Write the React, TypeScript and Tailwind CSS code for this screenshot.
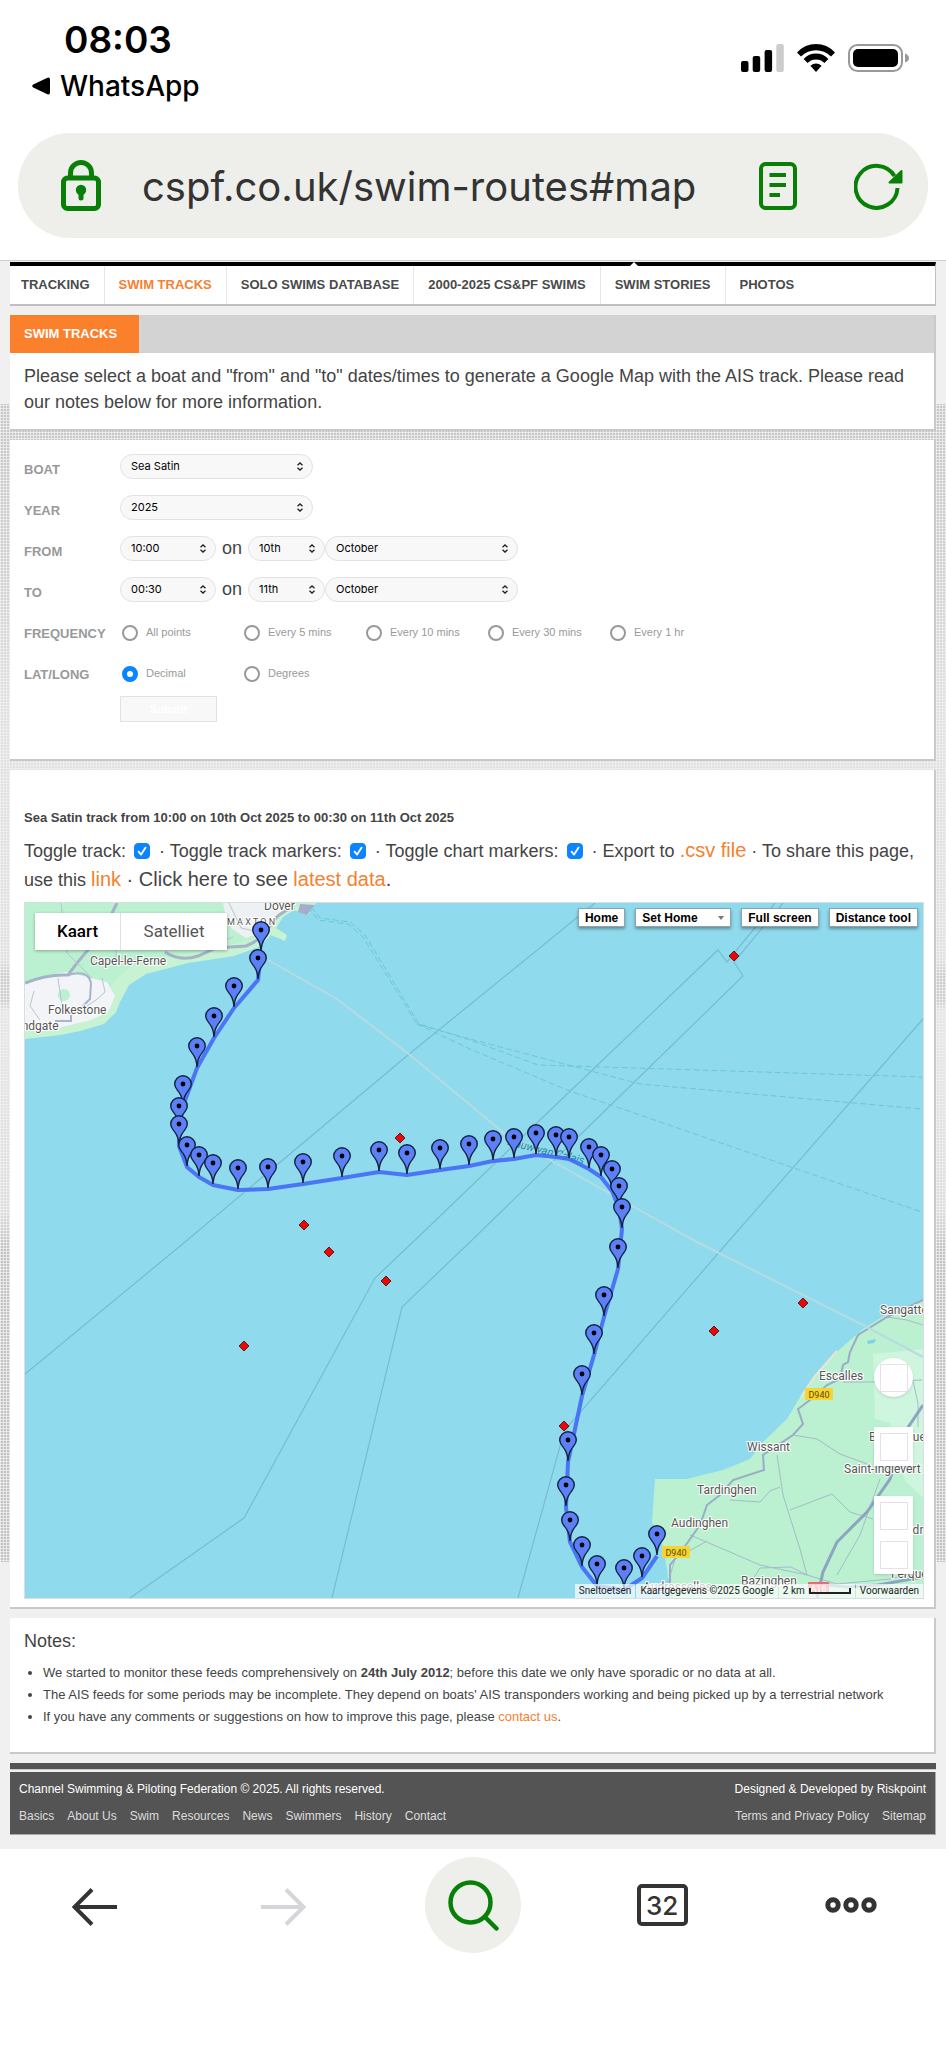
import React, { useState } from "react";

interface SelectProps {
  label: string;
  options: string[];
  width: string;
}

interface ToggleProps {
  label: string;
  checked: boolean;
  onChange: () => void;
}

interface RadioGroupProps {
  legend: string;
  name: string;
  options: string[];
  selected?: string;
}

const navItems = [
  "TRACKING",
  "SWIM TRACKS",
  "SOLO SWIMS DATABASE",
  "2000-2025 CS&PF SWIMS",
  "SWIM STORIES",
  "PHOTOS",
];

const footerLinks = [
  "Basics",
  "About Us",
  "Swim",
  "Resources",
  "News",
  "Swimmers",
  "History",
  "Contact",
];

// head of each pin, the tip is PIN_HEIGHT lower
const PIN_HEIGHT = 22;
const pins = [
  [236, 27], [233, 55], [209, 83], [189, 113], [172, 143], [158, 181],
  [154, 203], [154, 221], [162, 242], [174, 252], [188, 260], [213, 265],
  [243, 264], [278, 259], [317, 253], [354, 247], [382, 250], [415, 245],
  [444, 241], [468, 236], [489, 234], [511, 230], [531, 232], [544, 234],
  [564, 244], [576, 252], [587, 266], [594, 283], [597, 304], [593, 344],
  [579, 392], [569, 430], [557, 471], [543, 537], [541, 582], [545, 617],
  [557, 642], [572, 661], [599, 665], [617, 653], [632, 631],
];

const chartMarkers = [
  [375, 235], [279, 322], [304, 349], [361, 378], [219, 443],
  [709, 53], [689, 428], [778, 400], [539, 523],
];

const places = [
  { name: "Dover", x: 239, y: 7 },
  { name: "Capel-le-Ferne", x: 65, y: 62 },
  { name: "Folkestone", x: 23, y: 111 },
  { name: "Sandgate", x: -17, y: 127 },
  { name: "Sangatte", x: 855, y: 411 },
  { name: "Escalles", x: 794, y: 477 },
  { name: "Wissant", x: 722, y: 548 },
  { name: "Bonningues", x: 844, y: 538 },
  { name: "Saint-Inglevert", x: 819, y: 570 },
  { name: "Tardinghen", x: 672, y: 591 },
  { name: "Audinghen", x: 646, y: 624 },
  { name: "Landrethun", x: 868, y: 631 },
  { name: "Ferques", x: 866, y: 675 },
  { name: "Bazinghen", x: 716, y: 682 },
  { name: "Audresselles", x: 618, y: 688 },
];

const Select = ({ label, options, width }: SelectProps) => {
  return (
    <span className={`relative inline-flex ${width}`}>
      <select
        aria-label={label}
        className="h-[25px] w-full appearance-none rounded-full border border-[#e2e2e2] bg-[#f8f8f8] pl-[10px] pr-5 font-['Inter',sans-serif] text-[11px] text-black"
      >
        {options.map((option) => (
          <option key={option}>{option}</option>
        ))}
      </select>
      <svg
        className="pointer-events-none absolute right-[9px] top-2 h-[9px] w-2"
        viewBox="0 0 8 9"
        fill="none"
        stroke="#222"
        strokeWidth="1.3"
      >
        <path d="M1.5 3.2 4 .9l2.5 2.3M1.5 5.8 4 8.1l2.5-2.3" />
      </svg>
    </span>
  );
};

const Row = ({ name, children }: { name: string; children: React.ReactNode }) => {
  return (
    <div className="flex h-[41px] items-center">
      <span className="w-24 shrink-0 pt-[6px] text-[13px] font-bold text-[#999]">
        {name}
      </span>
      {children}
    </div>
  );
};

const RadioGroup = ({ legend, name, options, selected }: RadioGroupProps) => {
  return (
    <Row name={legend}>
      <div role="radiogroup" aria-label={legend} className="flex pt-1">
        {options.map((option) => (
          <label
            key={option}
            className="flex w-[122px] items-center gap-2 pl-[2px] text-[11px] text-[#999]"
          >
            <input
              type="radio"
              name={name}
              defaultChecked={option === selected}
              className="size-4 appearance-none rounded-full border-2 border-[#999] bg-white checked:border-[5px] checked:border-[#0a84ff]"
            />
            {option}
          </label>
        ))}
      </div>
    </Row>
  );
};

const Toggle = ({ label, checked, onChange }: ToggleProps) => {
  return (
    <label>
      {label}{" "}
      <span className="ml-[3px] mr-1 inline-grid size-4 align-[-2px]">
        <input
          type="checkbox"
          checked={checked}
          onChange={onChange}
          className="col-start-1 row-start-1 size-4 appearance-none rounded-[4px] border border-[#8d8d8d] checked:border-[#0a84ff] checked:bg-[#0a84ff]"
        />
        {checked && (
          <svg
            className="pointer-events-none col-start-1 row-start-1 size-4"
            viewBox="0 0 16 16"
            fill="none"
            stroke="white"
            strokeWidth="1.8"
            strokeLinecap="round"
            strokeLinejoin="round"
          >
            <path d="m4.6 8.6 2.5 3L11.6 4.6" />
          </svg>
        )}
      </span>
    </label>
  );
};

const StatusBar = () => {
  return (
    <div className="flex h-[133px] items-start justify-between pl-8 pr-9 pt-[17px] font-['Inter',sans-serif] text-black">
      <div>
        <p className="pl-8 text-[37px] font-semibold leading-[46px]">08:03</p>
        <a href="#back" className="mt-[5px] flex items-center gap-[10px] text-[28px] font-medium leading-9">
          <svg className="h-[18px] w-[18px]" viewBox="0 0 18 18">
            <path d="M1.2 7.6 15.4.7Q18 0 18 2.6v12.8q0 2.6-2.6 1.9L1.2 10.4q-2-1.4 0-2.8Z" />
          </svg>
          WhatsApp
        </a>
      </div>
      <div className="flex gap-[13px] pt-[27px]">
        <svg className="h-7 w-[43px]" viewBox="0 0 43 28">
          <rect x="0" y="17" width="7.5" height="11" rx="2" />
          <rect x="11.7" y="12" width="7.5" height="16" rx="2" />
          <rect x="23.6" y="6" width="7.5" height="22" rx="2" />
          <rect x="35.3" y="0" width="7.5" height="28" rx="2" fill="#ccc" />
        </svg>
        <svg className="h-7 w-[38px]" viewBox="0 0 38 28">
          <path d="M0 8.4Q8 0 19 0t19 8.4l-4 4Q27.500 6.200 19 6.200T4 12.400Z" />
          <path d="M6.600 15Q12 9.600 19 9.600T31.400 15l-4 4Q24 15.600 19 15.600T10.600 19Z" />
          <path d="M13.400 21.800Q16 19.400 19 19.400t5.600 2.400L19 28Z" />
        </svg>
        <svg className="h-7 w-[62px]" viewBox="0 0 62 28">
          <rect x="1" y="1" width="53" height="26" rx="8.500" fill="none" stroke="#999" strokeWidth="2" />
          <rect x="5" y="5" width="45" height="18" rx="5" />
          <path d="M57 9.500q4 1.500 4 4.500t-4 4.500Z" fill="#999" />
        </svg>
      </div>
    </div>
  );
};

const AddressBar = () => {
  return (
    <div className="mx-[18px] mb-[22px] flex h-[105px] items-center rounded-[52px] bg-[#eeefea] pl-[43px] pr-[25px] font-['Inter',sans-serif]">
      <svg className="h-[51px] w-10 shrink-0" viewBox="0 0 40 51" fill="none" stroke="#088008" strokeWidth="5">
        <rect x="2.500" y="18" width="35" height="30.500" rx="4" />
        <path d="M9.500 18v-5a10.500 10.500 0 0 1 21 0v5" />
        <circle cx="20" cy="30" r="5.200" fill="#088008" stroke="none" />
        <path d="M20 31v7" strokeLinecap="round" />
      </svg>
      <input
        aria-label="Address"
        defaultValue="cspf.co.uk/swim-routes#map"
        className="ml-[41px] min-w-0 flex-1 bg-transparent pt-[2px] text-[40px] text-[#333] outline-none"
      />
      <button aria-label="Reader view" className="ml-4 shrink-0">
        <svg className="h-12 w-[38px]" viewBox="0 0 38 48" fill="none" stroke="#088008" strokeWidth="4">
          <rect x="2" y="2" width="34" height="44" rx="4.500" />
          <path d="M10.500 13h16.500M10.500 23h16.500M10.500 33h10.500" />
        </svg>
      </button>
      <button aria-label="Reload" className="ml-[57px] shrink-0">
        <svg className="h-12 w-[49px]" viewBox="0 0 49 48" fill="none" stroke="#088008" strokeWidth="4">
          <path d="M43.500 26A21 21 0 1 1 40.500 14" />
          <path d="M47.500 9v11.500H35.500Z" fill="#088008" strokeWidth="2" strokeLinejoin="round" />
        </svg>
      </button>
    </div>
  );
};

const RoadBadge = ({ x, y, text, color, ink }: { x: number; y: number; text: string; color: string; ink: string }) => {
  return (
    <g>
      <rect x={x} y={y} width={text.length * 7} height="12" rx="1" fill={color} />
      <text x={x + text.length * 3.5} y={y + 9.5} textAnchor="middle" fontSize="9" fill={ink} stroke="none">
        {text}
      </text>
    </g>
  );
};

const Chart = ({ track, markers, chart }: { track: boolean; markers: boolean; chart: boolean }) => {
  return (
    <svg
      className="absolute inset-0 h-full w-full font-['Roboto',sans-serif]"
      viewBox="0 0 898 695"
      preserveAspectRatio="xMidYMid slice"
      role="img"
      aria-label="Track of Sea Satin across the Channel"
    >
      <rect width="898" height="695" fill="#90daee" />

      {/* England */}
      <path
        d="M0 0h291l-8 12-14-5-11 7-7 11 11 7-2 6-14-6-12 12-25 9-46 7-42 11-17 11-9 17-4 10-12 12-24 7-20 4-35 4Z"
        fill="#c8f3d3"
      />
      <path d="M0 0h285l-30 8-27 28-46 12-48 7-27 8-14 12-10 12-40-15-43 8Z" fill="#bbf0d0" />
      <path d="M0 80q20-8 42-11l40 10 8 14-7 16-17 8-33 8-33 1Z" fill="#f3f4f7" />
      <path d="m198 0 74 0-14 8-15 20-22 7-14-9-6-12Z" fill="#eef1f3" />
      <circle cx="39" cy="92" r="6" fill="#bbf0d0" />
      <path d="m275 1 15 1-8 10-9-3Z" fill="#a6accb" />
      <g fill="none" stroke="#a3b4c8" strokeWidth="3">
        <path d="M0 80q22-9 43-8 16-22 32-38L92 0" />
        <path d="M140 49q15 10 33 4l18-8 30-2q15-6 22-17 8-16 26-22" />
      </g>
      <g fill="none" stroke="#a9b3cc" strokeWidth="2">
        <path d="M43 72q20-6 23 8l-1 16-8 8M30 118h16v-6" />
      </g>
      <g fill="none" stroke="#b5c5d2" strokeWidth="1">
        <path d="m33 75 4 28M77 75l3 14-9 8-12 8M9 88l-4 15 10 14M36 0l6 50 25 25M95 10l-5 52M204 0l12 25 22 5M180 46l28-12" />
      </g>

      {/* France */}
      <path
        d="M898 397l-36 14-24 15-23 20-20 20-17 23-16 27-24 23-13 17-27 11-36 9-32 0-3 43 10 20 5 27 3 29h253Z"
        fill="#bbf0d0"
      />
      <path d="M848 451l50-5v149l-18-17-15-58-15-4Z" fill="#cef5dd" />
      <path d="M812 448 789 474l-13 20" fill="none" stroke="#e9e6d2" strokeWidth="2" />
      <path d="m842 438 9-2-2 4-6 1ZM858 648l8 2-1 6-7 0Z" fill="#7fd0ee" />
      <g fill="none" stroke="#a3bcc9" strokeWidth="1">
        <path d="m752 552 6 40 17 54 7 26M665 632l40 17 30 13 47 10 30 9 53-5 33-8M768 532l24 4 23 15 30 11M705 597l30 2 10-11 10-4M765 607l42-16 18 18 23 7M855 576l-20 56-23 40M818 479l32 0 47-2M862 414l20 3 16 5M888 478l5 22v24M640 690l10-34 32-18M782 672l-16-8-31 1-14 22" />
      </g>
      <path
        d="M898 397l-36 17-29 18-8 17-2 10-5 3-3 14-13 6-17 15-12 9 5 15-10 11-30 20 1 15-31 10-13 15-13 10-7 20-17 24-13 16v20l2 13"
        fill="none"
        stroke="#9aacc8"
        strokeWidth="2"
      />
      <path
        d="M898 502l-16 24-17 50-23 33-30 30-14 30-6 26M793 681l30 3 30-2 45-8"
        fill="none"
        stroke="#8ea5c2"
        strokeWidth="3"
      />

      {/* sea lines */}
      <g fill="none" stroke="#78bccd" strokeWidth="1.2">
        <path d="M0 471 160 339 383 152 570 0" />
        <path d="m105 695 114-80L350 375l38-36 127-122L693 47l9 12 48-59" />
        <path d="m307 695 70-291 68-65 110-107L718 73l-9-14 49-59" />
        <path d="m493 695 44-159 8-15L703 339 898 116" />
      </g>
      <path d="m243 57 69 39 73 56 95 79 45 26 147 82 166 83 60 32" fill="none" stroke="#b7dae4" strokeWidth="2" />
      <g fill="none" stroke="#6cc6d9" strokeWidth="1" strokeDasharray="6 3">
        <path d="m283 4 10 13 30 4 15 13 54 87 53 15 170 45 282 25" />
        <path d="m286 4 9 11 30 4 15 13 54 89 51 16 68 25 384 12" />
        <path d="m392 121 53 25 97 41 355 122" />
      </g>
      <text
        x="482"
        y="242"
        fontSize="11"
        fontStyle="italic"
        fill="#2488a0"
        transform="rotate(14 482 242)"
      >
        Nauw van Calais
      </text>

      <g fill="#555" stroke="white" strokeWidth="2" paintOrder="stroke">
        {places.map((place) => (
          <text key={place.name} x={place.x} y={place.y} fontSize="12">
            {place.name}
          </text>
        ))}
        <text x="202" y="22" fontSize="9">
          M A X T O N
        </text>
      </g>
      <RoadBadge x={780} y={485} text="D940" color="#f7d433" ink="#5c4b00" />
      <RoadBadge x={637} y={643} text="D940" color="#f7d433" ink="#5c4b00" />
      <RoadBadge x={783} y={679} text="A16" color="#ec6a72" ink="#fff" />

      {track && (
        <polyline
          points={pins.map(([x, y]) => `${x},${y + PIN_HEIGHT}`).join(" ")}
          fill="none"
          stroke="#4369f5"
          strokeWidth="4"
          strokeLinejoin="round"
          strokeOpacity="0.9"
        />
      )}
      {chart &&
        chartMarkers.map(([x, y]) => (
          <path key={`${x}-${y}`} d={`M${x} ${y - 5}l5 5-5 5-5-5Z`} fill="#f00505" stroke="#5a2020" />
        ))}
      {markers &&
        pins.map(([x, y]) => (
          <g key={`${x}-${y}`} transform={`translate(${x} ${y})`}>
            <path
              d="M0 21Q-.5 13-3.800 8.600C-5.500 6-8.300 4-8.300 0a8.300 8.300 0 0 1 16.600 0C8.300 4 5.500 6 3.800 8.600Q.5 13 0 21Z"
              fill="#5b80f7"
              stroke="#14233f"
              strokeWidth="1.4"
            />
            <circle r="2.400" fill="#000" />
          </g>
        ))}
    </svg>
  );
};

const mapButton =
  "h-[19px] border border-[#8fa3ab] bg-white px-[6px] text-[12px] font-bold leading-none text-black shadow-[0_2px_3px_rgba(0,0,0,0.35)]";

const SquareButton = ({ label }: { label: string }) => {
  return (
    <button aria-label={label} className="flex size-[39px] items-center justify-center">
      <span className="size-7 border border-[#eadfe6]" />
    </button>
  );
};

const SwimMap = ({ track, markers, chart }: { track: boolean; markers: boolean; chart: boolean }) => {
  return (
    <div className="relative mt-2 h-[697px] overflow-hidden border border-[#d9dfe0]">
      <Chart track={track} markers={markers} chart={chart} />

      <div className="absolute left-[10px] top-[10px] flex h-[37px] bg-white font-['Roboto',sans-serif] text-[17px] shadow-[0_1px_3px_rgba(0,0,0,0.3)]">
        <button className="w-[86px] border-r border-[#e0e0e0] font-medium text-black">
          Kaart
        </button>
        <button className="w-[106px] text-[#565656]">Satelliet</button>
      </div>

      <div className="absolute right-[5px] top-[5px] flex gap-[10px]">
        <button className={mapButton}>Home</button>
        <span className="relative flex">
          <select aria-label="Set Home" className={`${mapButton} w-24 appearance-none`}>
            <option>Set Home</option>
          </select>
          <svg className="pointer-events-none absolute right-[7px] top-2 h-1 w-[6px]" viewBox="0 0 6 4">
            <path d="M0 0h6L3 4Z" fill="#777" />
          </svg>
        </span>
        <button className={mapButton}>Full screen</button>
        <button className={mapButton}>Distance tool</button>
      </div>

      <div className="absolute bottom-6 right-[10px] flex flex-col gap-[30px]">
        <div className="rounded-full bg-white shadow-sm">
          <SquareButton label="Camera" />
        </div>
        <div className="bg-white shadow-sm">
          <SquareButton label="Street view" />
        </div>
        <div className="flex flex-col bg-white shadow-sm">
          <SquareButton label="Zoom in" />
          <SquareButton label="Zoom out" />
        </div>
      </div>

      <div className="absolute bottom-0 right-0 flex h-[14px] gap-px font-['Roboto',sans-serif] text-[10px] leading-[14px] text-[#222]">
        <button className="bg-white/70 px-1">Sneltoetsen</button>
        <span className="bg-white/70 px-1">Kaartgegevens ©2025 Google</span>
        <span className="flex items-center gap-1 bg-white/70 px-1">
          2 km
          <span className="h-[6px] w-[42px] border-2 border-t-0 border-[#222]" />
        </span>
        <a href="#terms" className="bg-white/70 px-1">
          Voorwaarden
        </a>
      </div>
    </div>
  );
};

const card = "border-b-2 border-r-2 border-[#c9c9c9] bg-white pl-[14px] pr-[10px]";

const BottomBar = () => {
  return (
    <nav className="grid h-[200px] grid-cols-5 items-start justify-items-center bg-white pt-2 font-['Inter',sans-serif]">
      <button aria-label="Back" className="flex h-24 items-center pt-1">
        <svg className="h-[38px] w-[45px]" viewBox="0 0 45 38" fill="none" stroke="#333" strokeWidth="4">
          <path d="M45 19H3M20 1.500 2.500 19 20 36.500" />
        </svg>
      </button>
      <button aria-label="Forward" disabled className="flex h-24 items-center pt-1">
        <svg className="h-[38px] w-[45px]" viewBox="0 0 45 38" fill="none" stroke="#d6d6da" strokeWidth="4">
          <path d="M0 19h42M25 1.500 42.500 19 25 36.500" />
        </svg>
      </button>
      <button aria-label="Search" className="flex size-24 items-center justify-center rounded-full bg-[#eeefea]">
        <svg className="size-[52px]" viewBox="0 0 52 52" fill="none" stroke="#088008" strokeWidth="4.500">
          <circle cx="23.500" cy="23.500" r="20" />
          <path d="m38 38 11.500 11.500" strokeLinecap="round" />
        </svg>
      </button>
      <button aria-label="Tabs" className="flex h-24 items-center">
        <span className="flex h-[42px] w-[51px] items-center justify-center rounded-[5px] border-4 border-[#333] text-[26px] font-medium text-[#333]">
          32
        </span>
      </button>
      <button aria-label="Menu" className="flex h-24 items-center">
        <svg className="h-4 w-[52px]" viewBox="0 0 52 16" fill="none" stroke="#333" strokeWidth="5">
          <circle cx="8" cy="8" r="5.200" />
          <circle cx="26" cy="8" r="5.200" />
          <circle cx="44" cy="8" r="5.200" />
        </svg>
      </button>
    </nav>
  );
};

const App = () => {
  const [track, setTrack] = useState(true);
  const [markers, setMarkers] = useState(true);
  const [chart, setChart] = useState(true);

  return (
    <div className="bg-white font-['Liberation_Sans',Arial,sans-serif] text-[#444]">
      <header>
        <StatusBar />
        <AddressBar />
      </header>

      {/* halftone backdrop, veiled where it fades out */}
      <main className="border-t border-[#cfcfcf] bg-[#b4b4b4] bg-[image:linear-gradient(to_bottom,#f0f0f0_143px,#f0f0f050_143px,#f0f0f070_300px,#f0f0f0c0_450px,#f0f0f0c0_700px,#f0f0f060_714px,#f0f0f070_740px,#f0f0f0d8_750px,#f0f0f0b0_950px,#f0f0f040_985px,#f0f0f040_1301px,#f0f0f0_1301px),repeating-linear-gradient(to_right,#ffffff99_0_1px,transparent_1px_3px),repeating-linear-gradient(to_bottom,#ffffff99_0_1px,transparent_1px_3px)] px-[10px] pb-[14px] pt-px">
        <nav className="relative flex h-11 border-b-2 border-r border-t-4 border-[#c0c0c0] border-t-black bg-white text-[13px] font-bold">
          {navItems.map((item) => (
            <a
              key={item}
              href="#nav"
              className={`flex items-center whitespace-nowrap border-r border-[#e6e6e6] px-[14px] first:pl-[11px] last-of-type:border-r-0 ${
                item === "SWIM TRACKS" ? "text-[#f4812f]" : "text-[#4a4a4a]"
              }`}
            >
              {item}
            </a>
          ))}
          <span className="absolute left-[67%] top-[-4px] size-0 border-x-4 border-b-4 border-x-transparent border-b-white" />
        </nav>

        <section className="mt-[9px] border-b-2 border-r-2 border-[#c9c9c9] bg-white">
          <div className="flex h-[38px] bg-[#d3d3d3]">
            <h1 className="flex items-center bg-[#fb802b] pl-[14px] pr-[22px] text-[13px] font-bold text-white">
              SWIM TRACKS
            </h1>
          </div>
          <p className="pb-[14px] pl-[14px] pr-[10px] pt-[10px] text-[18px] leading-[26px]">
            Please select a boat and "from" and "to" dates/times to generate a
            Google Map with the AIS track. Please read our notes below for more
            information.
          </p>
        </section>

        <form className={`mt-[9px] pb-[37px] pt-[6px] ${card}`} onSubmit={(e) => e.preventDefault()}>
          <Row name="BOAT">
            <Select label="Boat" options={["Sea Satin"]} width="w-[193px]" />
          </Row>
          <Row name="YEAR">
            <Select label="Year" options={["2025"]} width="w-[193px]" />
          </Row>
          <Row name="FROM">
            <Select label="From time" options={["10:00"]} width="w-24" />
            <span className="px-[6px] text-[18px]">on</span>
            <Select label="From day" options={["10th"]} width="w-[77px]" />
            <Select label="From month" options={["October"]} width="w-[193px]" />
          </Row>
          <Row name="TO">
            <Select label="To time" options={["00:30"]} width="w-24" />
            <span className="px-[6px] text-[18px]">on</span>
            <Select label="To day" options={["11th"]} width="w-[77px]" />
            <Select label="To month" options={["October"]} width="w-[193px]" />
          </Row>
          <RadioGroup
            legend="FREQUENCY"
            name="frequency"
            options={["All points", "Every 5 mins", "Every 10 mins", "Every 30 mins", "Every 1 hr"]}
          />
          <RadioGroup
            legend="LAT/LONG"
            name="latlong"
            options={["Decimal", "Degrees"]}
            selected="Decimal"
          />
          <button
            type="submit"
            className="ml-24 mt-1 block h-[26px] w-[97px] border border-[#e2e2e2] bg-[#f8f8f8] text-[11px] font-bold text-white"
          >
            Submit
          </button>
        </form>

        <section className={`mt-[9px] pb-2 pt-[39px] ${card}`}>
          <h2 className="text-[13px] font-bold leading-[18px]">
            Sea Satin track from 10:00 on 10th Oct 2025 to 00:30 on 11th Oct 2025
          </h2>
          <p className="mt-[9px] text-[18px] leading-7">
            <Toggle label="Toggle track:" checked={track} onChange={() => setTrack(!track)} />
            {" · "}
            <Toggle label="Toggle track markers:" checked={markers} onChange={() => setMarkers(!markers)} />
            {" · "}
            <Toggle label="Toggle chart markers:" checked={chart} onChange={() => setChart(!chart)} />
            {" · Export to "}
            <a href="#csv" className="text-[20px] text-[#f4812f]">.csv file</a>
            {" · To share this page, use this "}
            <a href="#link" className="text-[20px] text-[#f4812f]">link</a>
            <span className="text-[20px]">
              {" · Click here to see "}
              <a href="#latest" className="text-[#f4812f]">latest data</a>.
            </span>
          </p>
          <SwimMap track={track} markers={markers} chart={chart} />
        </section>

        <section className={`mt-[9px] pb-6 pt-[10px] ${card}`}>
          <h2 className="text-[18px] leading-[26px]">Notes:</h2>
          <ul className="mt-2 list-disc pl-[19px] text-[13px] leading-[22px]">
            <li>
              We started to monitor these feeds comprehensively on{" "}
              <b>24th July 2012</b>; before this date we only have sporadic or
              no data at all.
            </li>
            <li>
              The AIS feeds for some periods may be incomplete. They depend on
              boats' AIS transponders working and being picked up by a
              terrestrial network
            </li>
            <li>
              If you have any comments or suggestions on how to improve this
              page, please{" "}
              <a href="#contact" className="text-[#f4812f]">contact us</a>.
            </li>
          </ul>
        </section>

        <footer className="mt-[9px] text-[12px] text-white">
          <div className="h-[7px] border-b border-[#c9c9c9] bg-[#545454]" />
          <div className="mt-[2px] border-b border-r border-[#aaa] bg-[#545454] px-[9px] pb-[9px] pt-2">
            <div className="flex justify-between leading-[18px]">
              <p>Channel Swimming &amp; Piloting Federation © 2025. All rights reserved.</p>
              <p>Designed &amp; Developed by Riskpoint</p>
            </div>
            <div className="mt-[9px] flex justify-between leading-[18px] text-[#dcdcdc]">
              <div className="flex gap-[13px]">
                {footerLinks.map((link) => (
                  <a key={link} href="#footer">
                    {link}
                  </a>
                ))}
              </div>
              <div className="flex gap-[13px]">
                <a href="#privacy">Terms and Privacy Policy</a>
                <a href="#sitemap">Sitemap</a>
              </div>
            </div>
          </div>
        </footer>
      </main>

      <BottomBar />
    </div>
  );
};

export default App;
